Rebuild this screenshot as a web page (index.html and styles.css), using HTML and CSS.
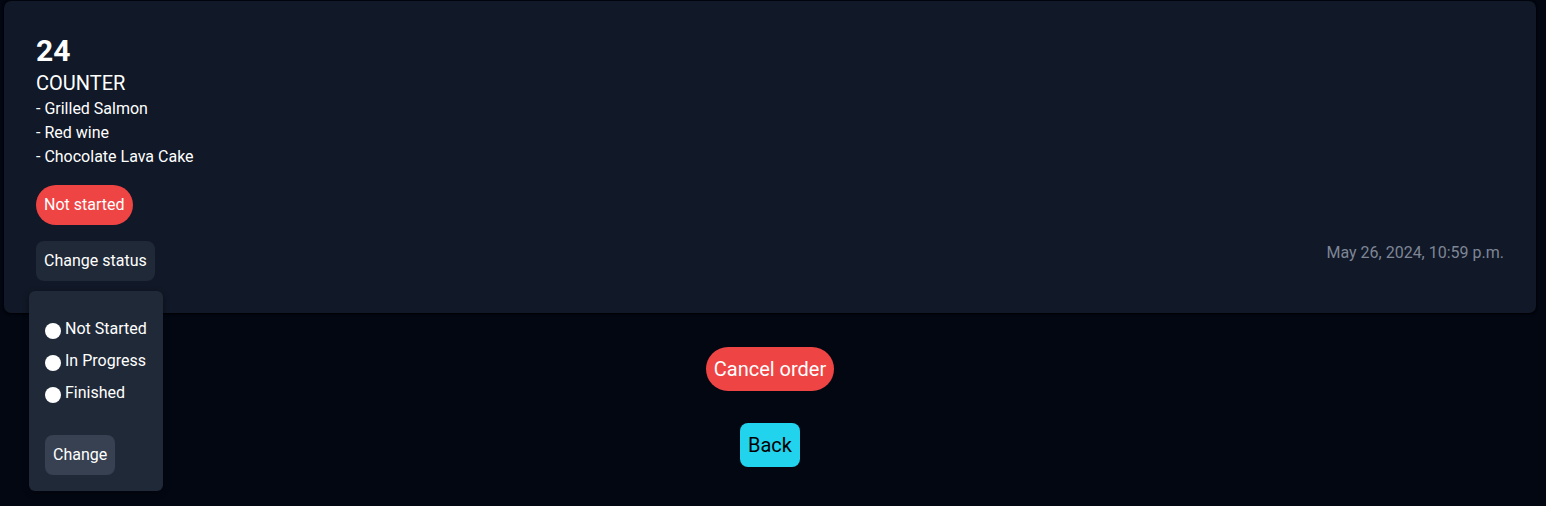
FILE: index.html
```html
<!DOCTYPE html>
<html>
<head>
<meta charset="utf-8">
<link rel="stylesheet" href="styles.css">
</head>
<body>
<div class="page">
  <div class="card">
    <div class="card-main">
      <h1 class="num">24</h1>
      <div class="place">COUNTER</div>
      <ul class="items">
        <li>- Grilled Salmon</li>
        <li>- Red wine</li>
        <li>- Chocolate Lava Cake</li>
      </ul>
      <span class="badge">Not started</span>
      <div class="status-wrap">
        <button class="btn-status">Change status</button>
        <div class="dropdown">
          <label class="opt"><span class="radio"></span>Not Started</label>
          <label class="opt"><span class="radio"></span>In Progress</label>
          <label class="opt"><span class="radio"></span>Finished</label>
          <button class="btn-change">Change</button>
        </div>
      </div>
    </div>
    <div class="date">May 26, 2024, 10:59 p.m.</div>
  </div>
  <div class="actions">
    <button class="btn-cancel">Cancel order</button>
    <button class="btn-back">Back</button>
  </div>
</div>
</body>
</html>
```

FILE: styles.css
```css
* { box-sizing: border-box; }
html, body { margin: 0; height: 100%; }
body {
  background: #030712;
  font-family: Roboto, "Liberation Sans", sans-serif;
  color: #ffffff;
}
.page {
  padding: 1px 10px 0 4px;
}
.card {
  background: #111827;
  border-radius: 7px;
  box-shadow: 0 1px 3px rgba(0,0,0,0.8), 0 0 2px rgba(0,0,0,0.9);
  padding: 32px 32px 32px 32px;
  height: 312px;
  display: flex;
  justify-content: space-between;
  align-items: flex-end;
}
.card-main {
  display: flex;
  flex-direction: column;
  align-items: flex-start;
}
.num {
  margin: 0;
  font-size: 30px;
  line-height: 36px;
  font-weight: 700;
}
.place {
  font-size: 20px;
  line-height: 28px;
}
.items {
  list-style: none;
  margin: 0;
  padding: 0;
  font-size: 16px;
  line-height: 24px;
}
.badge {
  margin-top: 16px;
  background: #ef4444;
  border-radius: 999px;
  padding: 8px 8px;
  font-size: 16px;
  line-height: 24px;
}
.status-wrap {
  position: relative;
  margin-top: 16px;
}
button {
  font-family: inherit;
  border: none;
  cursor: pointer;
}
.btn-status {
  display: block;
  background: #1f2937;
  color: #fff;
  border-radius: 8px;
  padding: 8px 8px;
  font-size: 16px;
  line-height: 24px;
}
.dropdown {
  position: absolute;
  left: -7px;
  top: 50px;
  width: 134px;
  height: 200px;
  background: #1f2937;
  border-radius: 6px;
  padding: 22px 16px 16px 16px;
  display: flex;
  flex-direction: column;
  align-items: flex-start;
  z-index: 5;
  box-shadow: 0 2px 6px rgba(0,0,0,0.4);
}
.opt {
  display: flex;
  align-items: center;
  gap: 4px;
  font-size: 16px;
  line-height: 24px;
  height: 32px;
}
.radio {
  width: 16px;
  height: 16px;
  border-radius: 50%;
  background: #fff;
  margin-top: 4px;
}
.btn-change {
  margin-top: 26px;
  background: #374151;
  color: #fff;
  border-radius: 8px;
  padding: 8px 8px;
  font-size: 16px;
  line-height: 24px;
}
.date {
  color: #7e8696;
  font-size: 16px;
  line-height: 24px;
  margin-bottom: 16px;
}
.actions {
  display: flex;
  flex-direction: column;
  align-items: center;
  gap: 32px;
  margin-top: 34px;
}
.btn-cancel {
  background: #ef4444;
  color: #fff;
  border-radius: 999px;
  padding: 8px 8px;
  font-size: 20px;
  line-height: 28px;
}
.btn-back {
  background: #22d3ee;
  color: #000;
  border-radius: 8px;
  padding: 8px 8px;
  font-size: 20px;
  line-height: 28px;
}
```
